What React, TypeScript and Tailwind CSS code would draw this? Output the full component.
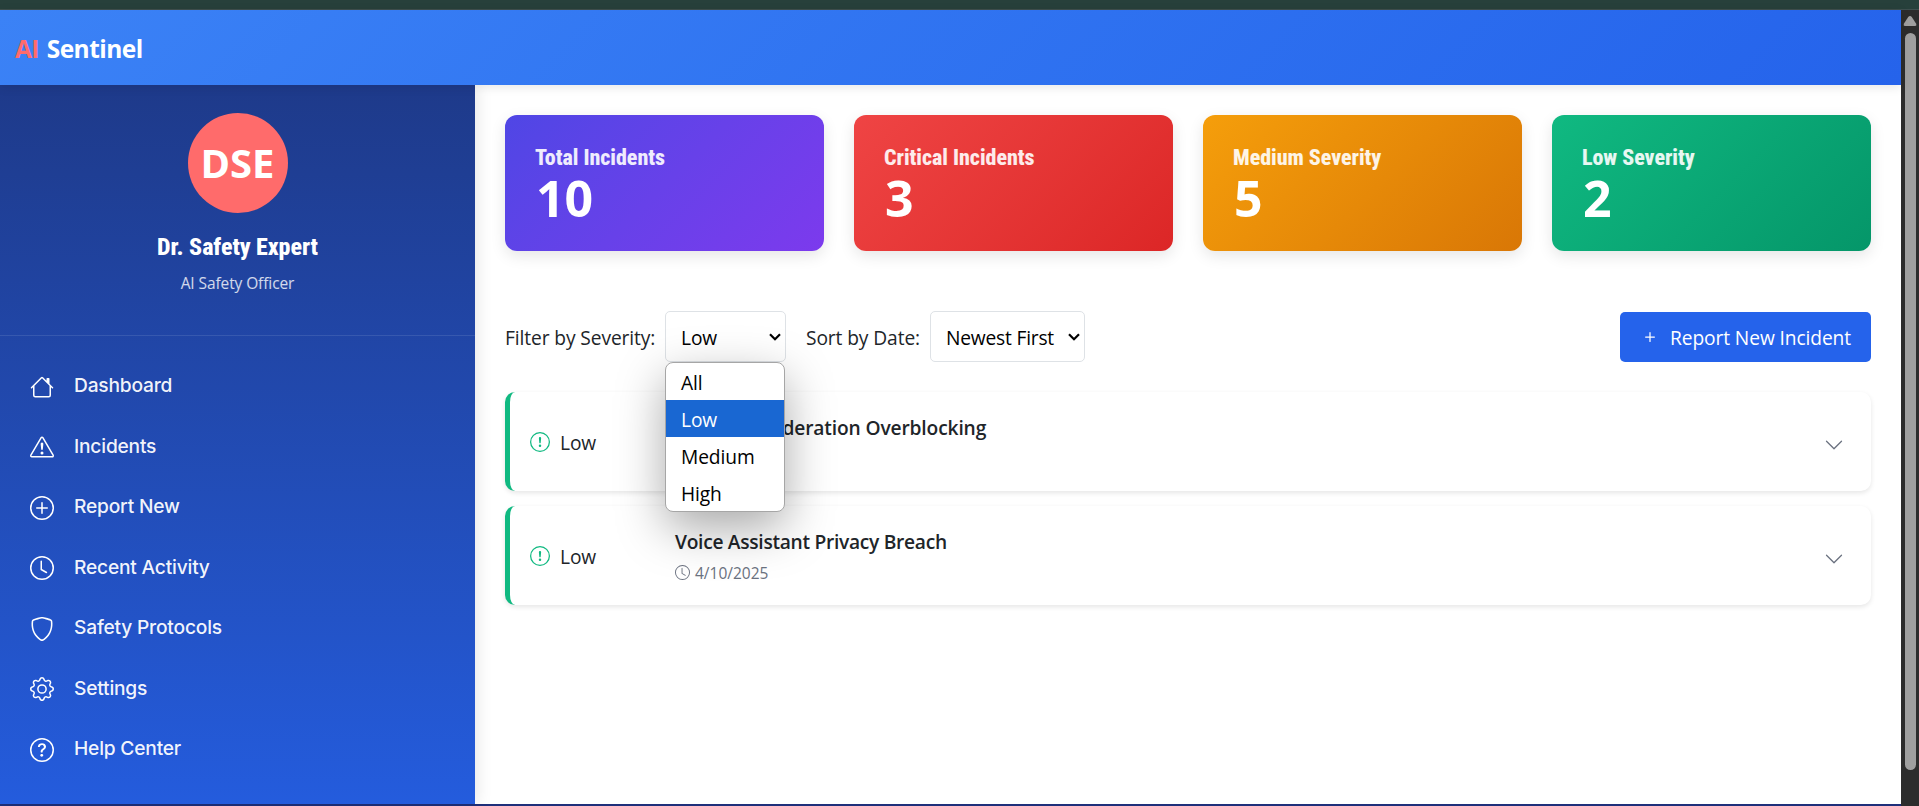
import {
  BsHouse,
  BsExclamationTriangle,
  BsPlusCircle,
  BsClock,
  BsShield,
  BsGear,
  BsQuestionCircle,
  BsExclamationCircle,
  BsChevronDown,
  BsPlus,
} from "react-icons/bs";

const nav = [
  { label: "Dashboard", Icon: BsHouse },
  { label: "Incidents", Icon: BsExclamationTriangle },
  { label: "Report New", Icon: BsPlusCircle },
  { label: "Recent Activity", Icon: BsClock },
  { label: "Safety Protocols", Icon: BsShield },
  { label: "Settings", Icon: BsGear },
  { label: "Help Center", Icon: BsQuestionCircle },
];

const stats = [
  { label: "Total Incidents", value: 10, bg: "from-[#4f46e5] to-[#7c3aed]" },
  { label: "Critical Incidents", value: 3, bg: "from-[#ef4444] to-[#dc2626]" },
  { label: "Medium Severity", value: 5, bg: "from-[#f59e0b] to-[#d97706]" },
  { label: "Low Severity", value: 2, bg: "from-[#10b981] to-[#059669]" },
];

const severities = ["All", "Low", "Medium", "High"];

const incidents = [
  { title: "Content Moderation Overblocking", date: "4/12/2025", tracking: "tracking-[-0.14px]" },
  { title: "Voice Assistant Privacy Breach", date: "4/10/2025", tracking: "tracking-[-0.29px]" },
];

function Caret() {
  return (
    <svg width="12" height="8" viewBox="0 0 12 8" fill="none" stroke="#000" strokeWidth="2.2">
      <path d="M1 1.2 6 6.2 11 1.2" />
    </svg>
  );
}

export default function App() {
  return (
    <div className="flex h-[806px] w-[1919px] flex-col overflow-hidden bg-white font-['Open_Sans',sans-serif] text-[19.2px] leading-[30px] tracking-[-0.1px] text-[#212529]">
      <div className="h-[10px] shrink-0 border-b border-[#3f4f4e] bg-[#27403b]" />
      <div className="flex min-h-0 flex-1">
        <div className="flex w-[1901px] flex-col border-b-2 border-[#1e2f7a]">
          <header className="relative z-20 flex h-[75px] shrink-0 items-center bg-linear-135 from-[#3b82f6] to-[#2563eb] pt-[2px] pl-[15px] shadow-[0_2px_10px_rgba(0,0,0,0.1)]">
            <span className="text-[24.5px] font-bold tracking-[-0.55px] text-white">
              <span className="mr-[2px] text-[#ff6b6b]">AI</span> Sentinel
            </span>
          </header>
          <div className="flex min-h-0 flex-1">
            <aside className="relative z-10 flex w-[475px] shrink-0 flex-col bg-linear-to-b from-[#1e3a8a] to-[#245cdd] text-white shadow-[2px_0_15px_rgba(0,0,0,0.1)]">
              <div className="flex h-[251px] flex-col items-center border-b border-white/10 pt-[28px]">
                <div className="flex size-[100px] items-center justify-center rounded-full bg-[#ff6b6b] text-[40px] font-bold tracking-normal">
                  DSE
                </div>
                <span className="mt-[19px] font-[Roboto] text-[24px] font-extrabold tracking-[-0.06px] [font-stretch:75%]">
                  Dr. Safety Expert
                </span>
                <span className="mt-[6px] text-[15.5px] text-white/80">AI Safety Officer</span>
              </div>
              <nav className="flex flex-col pt-[20px]">
                {nav.map(({ label, Icon }) => (
                  <div key={label} className="flex h-[60.5px] items-center pl-[30px]">
                    <Icon className="mt-px size-6" />
                    <span className="ml-5 pb-[2px] font-[Inter] font-medium tracking-[-0.2px] text-white/95">{label}</span>
                  </div>
                ))}
              </nav>
            </aside>
            <main className="flex flex-1 flex-col px-[30px] pt-[30px]">
              <section className="grid grid-cols-4 gap-[30px]">
                {stats.map((s) => (
                  <div
                    key={s.label}
                    className={`flex h-[136px] flex-col rounded-xl bg-linear-135 pt-[29px] pl-[30px] text-white shadow-[0_5px_15px_rgba(0,0,0,0.1)] ${s.bg}`}
                  >
                    <span className="font-[Roboto] text-[22px] leading-[28px] font-extrabold tracking-[-0.03px] text-white/90 [font-stretch:75%]">
                      {s.label}
                    </span>
                    <span className="pl-px text-[50px] leading-[53px] font-bold tracking-normal">{s.value}</span>
                  </div>
                ))}
              </section>
              <section className="mt-[60px] flex h-[51px] items-center">
                <span className="w-[151px] pt-[2px] whitespace-nowrap">Filter by Severity:</span>
                <div className="relative ml-[9px] flex h-[51px] w-[121px] items-center justify-between rounded-[5px] border border-[#dee2e6] bg-white pr-[4px] pl-[15px] text-black">
                  <span className="pt-[2px]">Low</span>
                  <Caret />
                  <div className="absolute top-[50px] -left-px z-30 w-[120px] overflow-hidden rounded-[8px] border border-[#a6a6a6] bg-white shadow-[0_16px_48px_rgba(0,0,0,0.34)]">
                    {severities.map((o) => (
                      <div
                        key={o}
                        className={`h-[37px] pl-[15px] leading-[40px] ${o === "Low" ? "bg-[#1967d2] text-white" : ""}`}
                      >
                        {o}
                      </div>
                    ))}
                  </div>
                </div>
                <span className="ml-[20px] w-[115px] pt-[2px] whitespace-nowrap">Sort by Date:</span>
                <div className="ml-[9px] flex h-[51px] w-[155px] items-center justify-between rounded-[5px] border border-[#dee2e6] bg-white pr-[4px] pl-[15px] text-black">
                  <span className="pt-[2px] tracking-[-0.2px]">Newest First</span>
                  <Caret />
                </div>
                <button className="ml-auto flex h-[50px] w-[251px] items-center rounded-[5px] bg-[#2563eb] pl-[20px] text-white">
                  <BsPlus className="size-5" />
                  <span className="ml-[10px] pt-[2px]">Report New Incident</span>
                </button>
              </section>
              <section className="mt-[30px] flex flex-col gap-[15px]">
                {incidents.map((i) => (
                  <div
                    key={i.title}
                    className="flex h-[99px] items-center rounded-[10px] border-l-[5px] border-[#10b981] bg-white pr-[27px] pl-[20px] shadow-[0_2px_5px_rgba(0,0,0,0.1)]"
                  >
                    <BsExclamationCircle className="size-5 text-[#10b981]" />
                    <span className="ml-[10px] w-[115px] pt-[3px]">Low</span>
                    <div className="flex flex-col pt-[4px]">
                      <span className={`font-semibold ${i.tracking}`}>{i.title}</span>
                      <span className="flex items-center text-[15.5px] tracking-normal text-[#6b7280]">
                        <BsClock className="mr-[5px] size-[15px]" />
                        <span className="pt-px">{i.date}</span>
                      </span>
                    </div>
                    <BsChevronDown className="mt-[6px] ml-auto size-5 text-[#6b7280]" />
                  </div>
                ))}
              </section>
            </main>
          </div>
        </div>
        <div className="flex w-[18px] flex-col items-center bg-[#2c2c2c]">
          <svg className="mt-[6px]" width="14" height="10" viewBox="0 0 14 10" fill="#9f9f9f">
            <path d="M7 0 Q8 0 8.8 1 L13 7.5 Q14 10 12 10 H2 Q0 10 1 7.5 L5.2 1 Q6 0 7 0Z" />
          </svg>
          <div className="mt-[7px] h-[737px] w-[11px] rounded-full bg-[#9f9f9f]" />
        </div>
      </div>
    </div>
  );
}
